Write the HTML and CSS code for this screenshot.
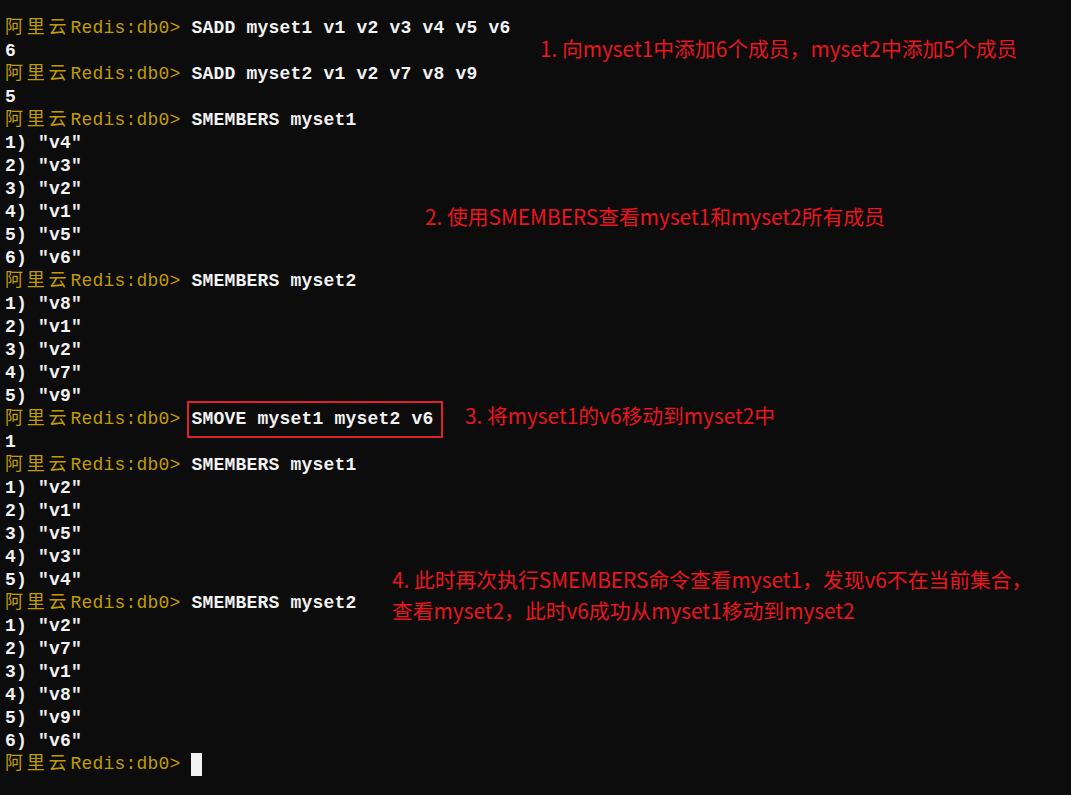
FILE: index.html
```html
<!DOCTYPE html>
<html lang="zh-CN">
<head>
    <meta charset="UTF-8">
    <meta name="viewport" content="width=device-width, initial-scale=1.0">
    <title>Redis SMOVE</title>
    <link rel="stylesheet" href="styles.css">
</head>
<body>
    <div class="terminal">
        <div class="line"><span class="prompt"><span class="cjk">阿里云</span>Redis:db0&gt; </span>SADD myset1 v1 v2 v3 v4 v5 v6</div>
        <div class="line">6</div>
        <div class="line"><span class="prompt"><span class="cjk">阿里云</span>Redis:db0&gt; </span>SADD myset2 v1 v2 v7 v8 v9</div>
        <div class="line">5</div>
        <div class="line"><span class="prompt"><span class="cjk">阿里云</span>Redis:db0&gt; </span>SMEMBERS myset1</div>
        <div class="line">1) "v4"</div>
        <div class="line">2) "v3"</div>
        <div class="line">3) "v2"</div>
        <div class="line">4) "v1"</div>
        <div class="line">5) "v5"</div>
        <div class="line">6) "v6"</div>
        <div class="line"><span class="prompt"><span class="cjk">阿里云</span>Redis:db0&gt; </span>SMEMBERS myset2</div>
        <div class="line">1) "v8"</div>
        <div class="line">2) "v1"</div>
        <div class="line">3) "v2"</div>
        <div class="line">4) "v7"</div>
        <div class="line">5) "v9"</div>
        <div class="line"><span class="prompt"><span class="cjk">阿里云</span>Redis:db0&gt; </span><span class="boxed">SMOVE myset1 myset2 v6</span></div>
        <div class="line">1</div>
        <div class="line"><span class="prompt"><span class="cjk">阿里云</span>Redis:db0&gt; </span>SMEMBERS myset1</div>
        <div class="line">1) "v2"</div>
        <div class="line">2) "v1"</div>
        <div class="line">3) "v5"</div>
        <div class="line">4) "v3"</div>
        <div class="line">5) "v4"</div>
        <div class="line"><span class="prompt"><span class="cjk">阿里云</span>Redis:db0&gt; </span>SMEMBERS myset2</div>
        <div class="line">1) "v2"</div>
        <div class="line">2) "v7"</div>
        <div class="line">3) "v1"</div>
        <div class="line">4) "v8"</div>
        <div class="line">5) "v9"</div>
        <div class="line">6) "v6"</div>
        <div class="line"><span class="prompt"><span class="cjk">阿里云</span>Redis:db0&gt; </span><span class="cursor"></span></div>
    </div>

    <!-- 标注 -->
    <div class="note note-1">1. 向myset1中添加6个成员，myset2中添加5个成员</div>
    <div class="note note-2">2. 使用SMEMBERS查看myset1和myset2所有成员</div>
    <div class="note note-3">3. 将myset1的v6移动到myset2中</div>
    <div class="note note-4">4. 此时再次执行SMEMBERS命令查看myset1，发现v6不在当前集合，<br>查看myset2，此时v6成功从myset1移动到myset2</div>
</body>
</html>
```

FILE: styles.css
```css
html, body {
    margin: 0;
    height: 100%;
    background-color: #0c0c0c;
}
body {
    position: relative;
    overflow: hidden;
}
.terminal {
    padding: 17px 0 0 5px;
    font-family: "Liberation Mono", "Noto Sans CJK SC", monospace;
    font-size: 18px;
    font-weight: bold;
    letter-spacing: 0.2px;
    color: #f2f2f2;
}
.line {
    height: 23px;
    line-height: 23px;
    white-space: pre;
}
.prompt {
    color: #c19c00;
    font-weight: normal;
}
.prompt .cjk {
    font-family: "Noto Sans CJK SC", sans-serif;
    line-height: 16px;
    letter-spacing: 3.8px;
}
.boxed {
    position: relative;
}
.boxed::after {
    content: "";
    position: absolute;
    top: -8px;
    bottom: -9px;
    left: -4px;
    right: -10px;
    border: 2px solid #e0202a;
}
.cursor {
    display: inline-block;
    width: 11px;
    height: 23px;
    vertical-align: top;
    background-color: #f2f2f2;
}
.note {
    position: absolute;
    font-family: "Noto Sans CJK SC", sans-serif;
    font-size: 20.8px;
    line-height: 31px;
    color: #e8161f;
    white-space: nowrap;
}
.note-1 { left: 540px; top: 33px; }
.note-2 { left: 425px; top: 201px; }
.note-3 { left: 465px; top: 400px; }
.note-4 { left: 392px; top: 564px; }
```
